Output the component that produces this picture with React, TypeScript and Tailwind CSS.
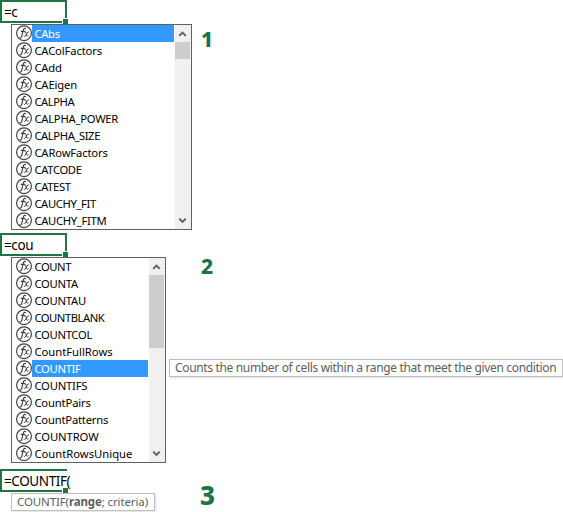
import React from "react";

const FONT = "font-['Noto_Sans','Open_Sans',sans-serif]";

type Item = { label: string; spacing: string };

function FxIcon() {
  return (
    <svg className="block h-[17px] w-4 shrink-0" viewBox="0 0 16 17" fill="none" stroke="#404040">
      <circle cx="8" cy="8.2" r="7.4" strokeWidth="1.2" />
      <path d="M9.9 3.9C8.6 2.7 7.7 3.6 7.3 5.2L5.8 11.2C5.4 12.8 4.5 13.4 3.4 12.6M4.8 6.4H8.9" strokeWidth="1.15" />
      <path d="M8.3 7C9.6 6 9.9 7.3 10.3 9C10.7 11.3 11.3 11.8 12.5 10.6M12.9 6.9C11.4 6.4 10.3 9.5 9.3 11C8.9 11.6 8.4 11.6 7.8 11.2" strokeWidth="1" />
    </svg>
  );
}

function Chevron({ down = false }: { down?: boolean }) {
  return (
    <svg className="block h-[17px] w-4" viewBox="0 0 16 17" fill="none" stroke="#606060">
      <path d={down ? "M4.2 6.6L7.5 9.9L10.8 6.6" : "M4.2 10.9L7.5 7.6L10.8 10.9"} strokeWidth="2" />
    </svg>
  );
}

function Cell({ text, open = false }: { text: string; open?: boolean }) {
  return (
    <div className={`relative h-[23px] w-[67px] border-2 border-[#217346] ${open ? "border-r-0" : ""}`}>
      <span className="block whitespace-nowrap pl-[2px] text-[13.5px] leading-[20px] tracking-[-0.4px] text-black">{text}</span>
      <span className={`absolute -bottom-[3px] h-[6px] w-[6px] border-l border-t border-white bg-[#217346] ${open ? "right-[-1px]" : "right-[-3px]"}`} />
    </div>
  );
}

function List({ items, selected, width, thumb }: { items: Item[]; selected: number; width: string; thumb: string }) {
  return (
    <div className={`ml-[11px] flex h-[206px] border border-[#606060] bg-white ${width}`}>
      <div className="min-w-0 flex-1">
        {items.map((item, i) => (
          <div key={item.label} className="flex h-[17px] pl-1">
            <FxIcon />
            <div className={`mr-px h-[17px] flex-1 whitespace-nowrap pl-[2.4px] text-[11.25px] leading-[18px] ${i === selected ? "bg-[#3399ff] text-white" : "text-black"}`}>
              <span className={item.spacing}>{item.label}</span>
            </div>
          </div>
        ))}
      </div>
      <div className="flex w-4 flex-col bg-[#f0f0f0]">
        <Chevron />
        <div className={`w-[15px] bg-[#cdcdcd] ${thumb}`} />
        <div className="mt-auto"><Chevron down /></div>
      </div>
    </div>
  );
}

const first: Item[] = [
  { label: "CAbs", spacing: "tracking-[-0.3px]" },
  { label: "CAColFactors", spacing: "tracking-[-0.15px]" },
  { label: "CAdd", spacing: "tracking-[-0.2px]" },
  { label: "CAEigen", spacing: "tracking-[-0.15px]" },
  { label: "CALPHA", spacing: "tracking-[-0.45px]" },
  { label: "CALPHA_POWER", spacing: "tracking-[-0.25px]" },
  { label: "CALPHA_SIZE", spacing: "tracking-[-0.42px]" },
  { label: "CARowFactors", spacing: "tracking-[-0.15px]" },
  { label: "CATCODE", spacing: "tracking-[-0.35px]" },
  { label: "CATEST", spacing: "tracking-[-0.35px]" },
  { label: "CAUCHY_FIT", spacing: "tracking-[-0.38px]" },
  { label: "CAUCHY_FITM", spacing: "tracking-[-0.32px]" },
];

const second: Item[] = [
  { label: "COUNT", spacing: "tracking-[-0.4px]" },
  { label: "COUNTA", spacing: "tracking-[-0.25px]" },
  { label: "COUNTAU", spacing: "tracking-[-0.25px]" },
  { label: "COUNTBLANK", spacing: "tracking-[-0.48px]" },
  { label: "COUNTCOL", spacing: "tracking-[-0.3px]" },
  { label: "CountFullRows", spacing: "tracking-[0px]" },
  { label: "COUNTIF", spacing: "tracking-[-0.3px]" },
  { label: "COUNTIFS", spacing: "tracking-[-0.2px]" },
  { label: "CountPairs", spacing: "tracking-[-0.15px]" },
  { label: "CountPatterns", spacing: "tracking-[-0.2px]" },
  { label: "COUNTROW", spacing: "tracking-[-0.08px]" },
  { label: "CountRowsUnique", spacing: "tracking-[0px]" },
];

export default function App() {
  return (
    <div className={`relative h-[512px] w-[563px] overflow-hidden bg-white ${FONT}`}>
      <Cell text="=c" />
      <div className="mt-px">
        <List items={first} selected={0} width="w-[181px]" thumb="h-[17px]" />
      </div>
      <div className="mt-[3px]"><Cell text="=cou" /></div>
      <div className="mt-px">
        <List items={second} selected={6} width="w-[155px]" thumb="h-[73px]" />
      </div>
      <div className="mt-[6px]"><Cell text="=COUNTIF(" open /></div>
      <div className="ml-[11px] mt-px h-[18px] w-[144px] whitespace-nowrap border border-[#bebebe] pl-[5px] text-[11.5px] leading-[15px] tracking-[-0.12px] text-[#606060] shadow-[1px_1px_2px_#0002]">
        COUNTIF(<b>range</b>; criteria)
      </div>
      <div className="absolute left-[169px] top-[359px] h-[18px] w-[394px] whitespace-nowrap border border-[#bebebe] bg-white pl-[5px] text-[12px] leading-[15px] tracking-[-0.34px] text-[#606060] shadow-[1px_1px_2px_#0002]">
        Counts the number of cells within a range that meet the given condition
      </div>
      <span className="absolute left-[201px] top-[29px] text-[21px] font-extrabold leading-[21px] text-[#217346]">1</span>
      <span className="absolute left-[201px] top-[256px] text-[21px] font-extrabold leading-[21px] text-[#217346]">2</span>
      <span className="absolute left-[200px] top-[482px] text-[26px] font-extrabold leading-[26px] text-[#217346]">3</span>
    </div>
  );
}
